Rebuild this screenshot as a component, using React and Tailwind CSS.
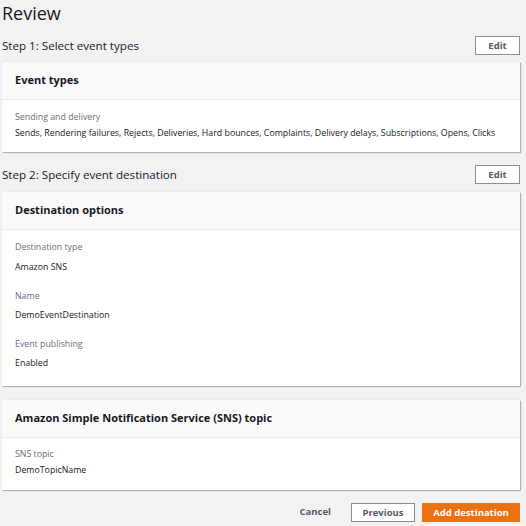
function EditButton() {
  return (
    <button
      type="button"
      className="h-[19px] w-[45px] border border-[#8a8f96] bg-white text-[9.5px] font-bold leading-none text-[#545b64]"
    >
      Edit
    </button>
  );
}

function Card({ title, children }) {
  return (
    <div className="bg-white shadow-[1px_1px_1px_rgba(0,0,0,0.25),0_0_1px_rgba(0,0,0,0.15)]">
      <div className="flex h-[38px] items-center border-b border-[#eaeded] bg-[#fafafa] px-[13px] text-[11px] font-bold text-[#16191f]">
        {title}
      </div>
      {children}
    </div>
  );
}

function Field({ label, value, gap = 'mt-[8px]' }) {
  return (
    <div>
      <p className="text-[8.8px] leading-[12px] text-[#687078]">{label}</p>
      <p className={`${gap} text-[8.8px] leading-[12px] text-[#16191f]`}>{value}</p>
    </div>
  );
}

export default function App() {
  return (
    <div className="h-[526px] w-[526px] overflow-hidden bg-[#f2f2f2] pl-[2px] pr-[6px] font-['Open_Sans',sans-serif]">
      <h1 className="pt-[1px] text-[18px] leading-[24px] text-[#16191f]">Review</h1>

      <div className="mt-[11px] flex items-center justify-between">
        <h2 className="text-[11.6px] text-[#16191f]">Step 1: Select event types</h2>
        <EditButton />
      </div>
      <div className="mt-[7px]">
        <Card title="Event types">
          <div className="px-[13px] pb-[13px] pt-[11px]">
            <Field
              label="Sending and delivery"
              value="Sends, Rendering failures, Rejects, Deliveries, Hard bounces, Complaints, Delivery delays, Subscriptions, Opens, Clicks"
              gap="mt-[4px]"
            />
          </div>
        </Card>
      </div>

      <div className="mt-[13px] flex items-center justify-between">
        <h2 className="text-[11.6px] text-[#16191f]">Step 2: Specify event destination</h2>
        <EditButton />
      </div>
      <div className="mt-[8px]">
        <Card title="Destination options">
          <div className="flex flex-col gap-[17px] px-[13px] pb-[17px] pt-[11px]">
            <Field label="Destination type" value="Amazon SNS" />
            <Field label="Name" value="DemoEventDestination" gap="mt-[7px]" />
            <Field label="Event publishing" value="Enabled" gap="mt-[7px]" />
          </div>
        </Card>
      </div>

      <div className="mt-[14px]">
        <Card title="Amazon Simple Notification Service (SNS) topic">
          <div className="px-[13px] pb-[14px] pt-[10px]">
            <Field label="SNS topic" value="DemoTopicName" gap="mt-[4px]" />
          </div>
        </Card>
      </div>

      <div className="mt-[13px] flex items-center justify-end">
        <button type="button" className="mr-[20px] text-[9.5px] font-bold text-[#545b64]">
          Cancel
        </button>
        <button
          type="button"
          className="mr-[7px] h-[19px] w-[64px] border border-[#8a8f96] bg-white text-[9.5px] font-bold leading-none text-[#545b64]"
        >
          Previous
        </button>
        <button
          type="button"
          className="h-[19px] w-[98px] bg-[#ec7211] text-[9.5px] font-bold leading-none text-white"
        >
          Add destination
        </button>
      </div>
    </div>
  );
}
